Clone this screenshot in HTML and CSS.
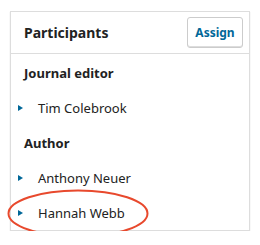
FILE: index.html
```html
<!DOCTYPE html>
<html>
<head>
<meta charset="utf-8">
<link rel="stylesheet" href="styles.css">
</head>
<body>
<div class="card">
  <div class="header">
    <h2 class="title">Participants</h2>
    <button class="assign">Assign</button>
  </div>
  <div class="list">
    <div class="group">Journal editor</div>
    <div class="person"><span class="caret"></span>Tim Colebrook</div>
    <div class="group">Author</div>
    <div class="person"><span class="caret"></span>Anthony Neuer</div>
    <div class="person"><span class="caret"></span>Hannah Webb</div>
  </div>
  <svg class="highlight" width="142" height="49" viewBox="0 0 142 49">
    <ellipse cx="71" cy="24.5" rx="69.5" ry="23" fill="none" stroke="#e8492d" stroke-width="2"/>
  </svg>
</div>
</body>
</html>
```
FILE: styles.css
```css
body {
  margin: 0;
  background: #fff;
  font-family: "Noto Sans", "Open Sans", sans-serif;
  color: #222;
}
.card {
  position: relative;
  margin: 11px 10px 0 10px;
  width: 238px;
  border: 1px solid #ddd;
  box-shadow: 0 1px 1px rgba(0,0,0,0.18);
  background: #fff;
}
.header {
  display: flex;
  justify-content: space-between;
  align-items: center;
  padding: 5px 6px 5px 13px;
  border-bottom: 1px solid #ddd;
}
.title {
  margin: 0;
  font-size: 14px;
  font-weight: 700;
}
.assign {
  height: 31px;
  width: 56px;
  padding: 0;
  background: #fff;
  border: 1px solid #ccc;
  border-radius: 3px;
  box-shadow: inset 0 -1px 0 #ddd;
  color: #006798;
  font-family: inherit;
  font-size: 12px;
  font-weight: 700;
}
.list {
  padding-top: 1px;
}
.group, .person {
  height: 35px;
  display: flex;
  align-items: center;
  font-size: 13px;
}
.group {
  font-weight: 700;
  padding-left: 13px;
}
.person {
  padding-left: 7px;
}
.caret {
  width: 0;
  height: 0;
  border-left: 5px solid #006798;
  border-top: 3.5px solid transparent;
  border-bottom: 3.5px solid transparent;
  margin-right: 15px;
}
.highlight {
  position: absolute;
  left: -4px;
  top: 177px;
}
```
